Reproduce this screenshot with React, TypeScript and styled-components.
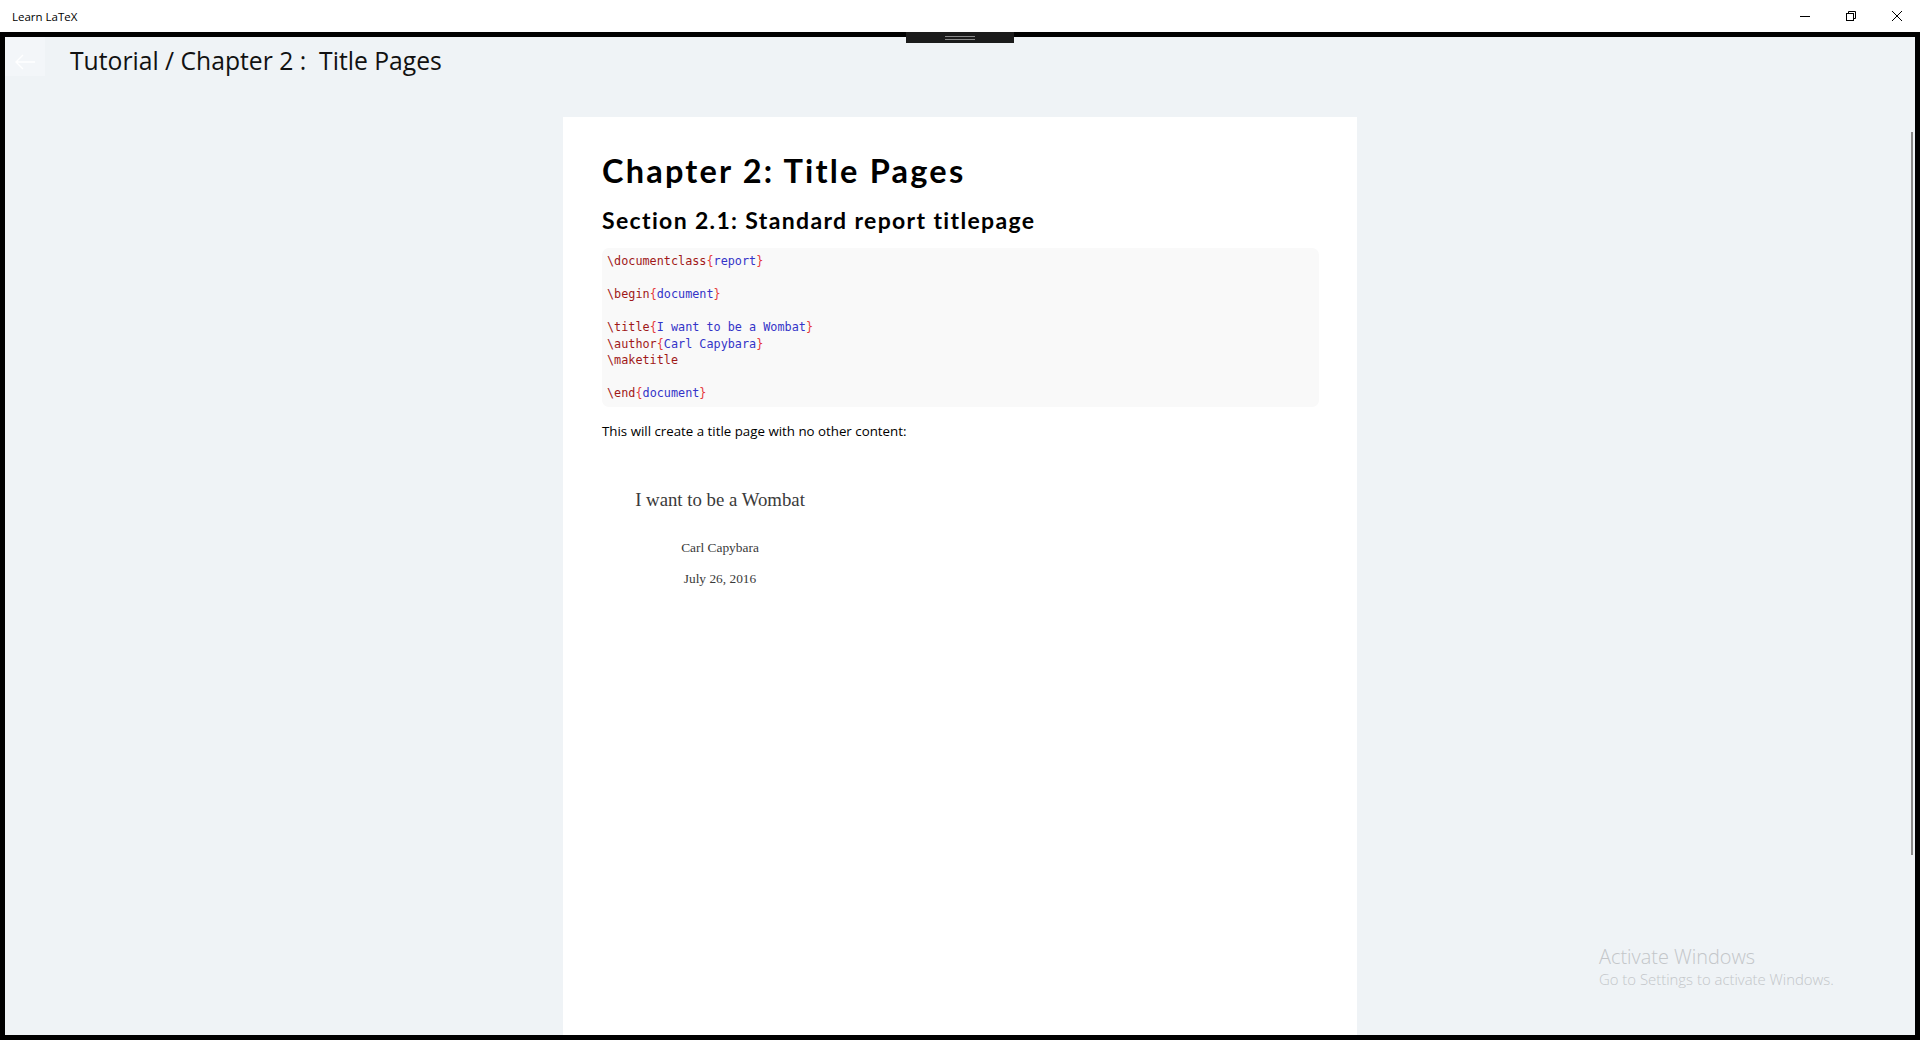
import React from "react";
import styled, { createGlobalStyle } from "styled-components";

const GlobalStyle = createGlobalStyle`
  html, body {
    margin: 0;
    padding: 0;
    background: #ffffff;
  }
  * {
    box-sizing: border-box;
  }
`;

const Window = styled.div`
  width: 1920px;
  height: 1040px;
  display: flex;
  flex-direction: column;
  overflow: hidden;
`;

const TitleBar = styled.div`
  height: 32px;
  flex: none;
  background: #ffffff;
  display: flex;
  align-items: center;
  justify-content: space-between;
  padding-left: 12px;
  font-family: "Open Sans", "Noto Sans", sans-serif;
  font-size: 11.5px;
  color: #000;
`;

const Controls = styled.div`
  display: flex;
  height: 32px;
`;

const ControlButton = styled.div`
  width: 46px;
  height: 32px;
  display: flex;
  align-items: center;
  justify-content: center;
  svg {
    display: block;
  }
`;

const Frame = styled.div`
  flex: 1;
  background: #000;
  padding: 5px;
  display: flex;
  position: relative;
  min-height: 0;
`;

const DragHandle = styled.div`
  position: absolute;
  top: 0;
  left: 50%;
  transform: translateX(-50%);
  width: 108px;
  height: 11px;
  background: #1b1b1b;
  display: flex;
  flex-direction: column;
  align-items: center;
  padding-top: 4px;
  gap: 2px;
  z-index: 3;
`;

const HandleLine = styled.div`
  width: 30px;
  height: 1px;
  background: #8a8a8a;
`;

const Surface = styled.div`
  flex: 1;
  background: #eff3f6;
  display: flex;
  flex-direction: column;
  position: relative;
  min-height: 0;
`;

const Header = styled.div`
  height: 80px;
  flex: none;
  display: flex;
  align-items: flex-start;
`;

const BackButton = styled.div`
  width: 40px;
  height: 39px;
  background: #f3f6f9;
  display: flex;
  justify-content: center;
  padding-top: 17px;
`;

const PageTitle = styled.h1`
  margin: 0 0 0 25px;
  font-family: "Open Sans", "Noto Sans", sans-serif;
  font-weight: 400;
  font-size: 24.7px;
  line-height: 48px;
  color: #111;
  white-space: pre;
`;

const Scroller = styled.div`
  flex: 1;
  display: flex;
  justify-content: center;
  min-height: 0;
`;

const Card = styled.div`
  width: 794px;
  background: #ffffff;
  padding: 32px 38px 0 39px;
`;

const ChapterHeading = styled.h2`
  margin: 0;
  font-family: Lato, "Noto Sans", sans-serif;
  font-weight: 700;
  font-size: 32.5px;
  line-height: 44px;
  color: #000;
  letter-spacing: 2.2px;
`;

const SectionHeading = styled.h3`
  margin: 12px 0 0;
  font-family: Lato, "Noto Sans", sans-serif;
  font-weight: 700;
  font-size: 23px;
  line-height: 30px;
  color: #000;
  letter-spacing: 1.35px;
`;

const CodeBlock = styled.pre`
  margin: 13px 0 0;
  background: #f9f9f9;
  border-radius: 7px;
  padding: 5px 6px 5px 5px;
  font-family: "DejaVu Sans Mono", "Liberation Mono", monospace;
  font-size: 11.8px;
  line-height: 16.5px;
  color: #3434c8;
`;

const Cmd = styled.span`
  color: #a01818;
`;

const Brace = styled.span`
  color: #e5393c;
`;

const Arg = styled.span`
  color: #3434c8;
`;

const Paragraph = styled.p`
  margin: 10px 0 0;
  font-family: "Open Sans", "Noto Sans", sans-serif;
  font-size: 13.3px;
  line-height: 28px;
  color: #000;
`;

const Rendered = styled.div`
  width: 240px;
  margin: 26px 0 0 -2px;
  padding: 18px 0 20px;
  display: flex;
  flex-direction: column;
  align-items: center;
  font-family: "Liberation Serif", "DejaVu Serif", serif;
  color: #3a3a3a;
`;

const RenderedTitle = styled.div`
  font-size: 18.8px;
  line-height: 22px;
`;

const RenderedLine = styled.div<{ $gap: number }>`
  font-size: 13.4px;
  line-height: 16px;
  margin-top: ${(p) => p.$gap}px;
`;

const ScrollThumb = styled.div`
  position: absolute;
  right: 2px;
  top: 95px;
  width: 2px;
  height: 723px;
  background: #8a8a8a;
`;

const Watermark = styled.div`
  position: absolute;
  left: 1594px;
  top: 908px;
  font-family: "Open Sans", "Noto Sans", sans-serif;
  color: #c3c6c9;
  pointer-events: none;
`;

const WatermarkTitle = styled.div`
  font-size: 19.9px;
  line-height: 24px;
  font-weight: 300;
`;

const WatermarkText = styled.div`
  font-size: 14.9px;
  line-height: 20px;
  font-weight: 300;
`;

function Line({ cmd, arg }: { cmd: string; arg?: string }) {
  return (
    <>
      <Cmd>{cmd}</Cmd>
      {arg !== undefined && (
        <>
          <Brace>{"{"}</Brace>
          <Arg>{arg}</Arg>
          <Brace>{"}"}</Brace>
        </>
      )}
      {"\n"}
    </>
  );
}

export default function App() {
  return (
    <Window>
      <GlobalStyle />
      <TitleBar>
        <span>Learn LaTeX</span>
        <Controls>
          <ControlButton>
            <svg width="10" height="10" viewBox="0 0 10 10">
              <path d="M0 5.5h10" stroke="#000" strokeWidth="1" />
            </svg>
          </ControlButton>
          <ControlButton>
            <svg width="10" height="10" viewBox="0 0 10 10" fill="none" stroke="#000" strokeWidth="1">
              <rect x="0.5" y="2.5" width="7" height="7" />
              <path d="M2.5 2.5V0.5h7v7h-2" />
            </svg>
          </ControlButton>
          <ControlButton>
            <svg width="10" height="10" viewBox="0 0 10 10" stroke="#000" strokeWidth="1">
              <path d="M0 0l10 10M10 0L0 10" />
            </svg>
          </ControlButton>
        </Controls>
      </TitleBar>
      <Frame>
        <DragHandle>
          <HandleLine />
          <HandleLine />
        </DragHandle>
        <Surface>
          <Header>
            <BackButton>
              <svg width="20" height="16" viewBox="0 0 20 16" fill="none" stroke="#ffffff" strokeWidth="1.4">
                <path d="M20 8H1M8 1L1 8l7 7" />
              </svg>
            </BackButton>
            <PageTitle>{"Tutorial / Chapter 2 :  Title Pages"}</PageTitle>
          </Header>
          <Scroller>
            <Card>
              <ChapterHeading>Chapter 2: Title Pages</ChapterHeading>
              <SectionHeading>Section 2.1: Standard report titlepage</SectionHeading>
              <CodeBlock>
                <Line cmd="\documentclass" arg="report" />
                {"\n"}
                <Line cmd="\begin" arg="document" />
                {"\n"}
                <Line cmd="\title" arg="I want to be a Wombat" />
                <Line cmd="\author" arg="Carl Capybara" />
                <Line cmd="\maketitle" />
                {"\n"}
                <Cmd>\end</Cmd>
                <Brace>{"{"}</Brace>
                <Arg>document</Arg>
                <Brace>{"}"}</Brace>
              </CodeBlock>
              <Paragraph>This will create a title page with no other content:</Paragraph>
              <Rendered>
                <RenderedTitle>I want to be a Wombat</RenderedTitle>
                <RenderedLine $gap={29}>Carl Capybara</RenderedLine>
                <RenderedLine $gap={15}>July 26, 2016</RenderedLine>
              </Rendered>
            </Card>
          </Scroller>
          <ScrollThumb />
          <Watermark>
            <WatermarkTitle>Activate Windows</WatermarkTitle>
            <WatermarkText>Go to Settings to activate Windows.</WatermarkText>
          </Watermark>
        </Surface>
      </Frame>
    </Window>
  );
}
